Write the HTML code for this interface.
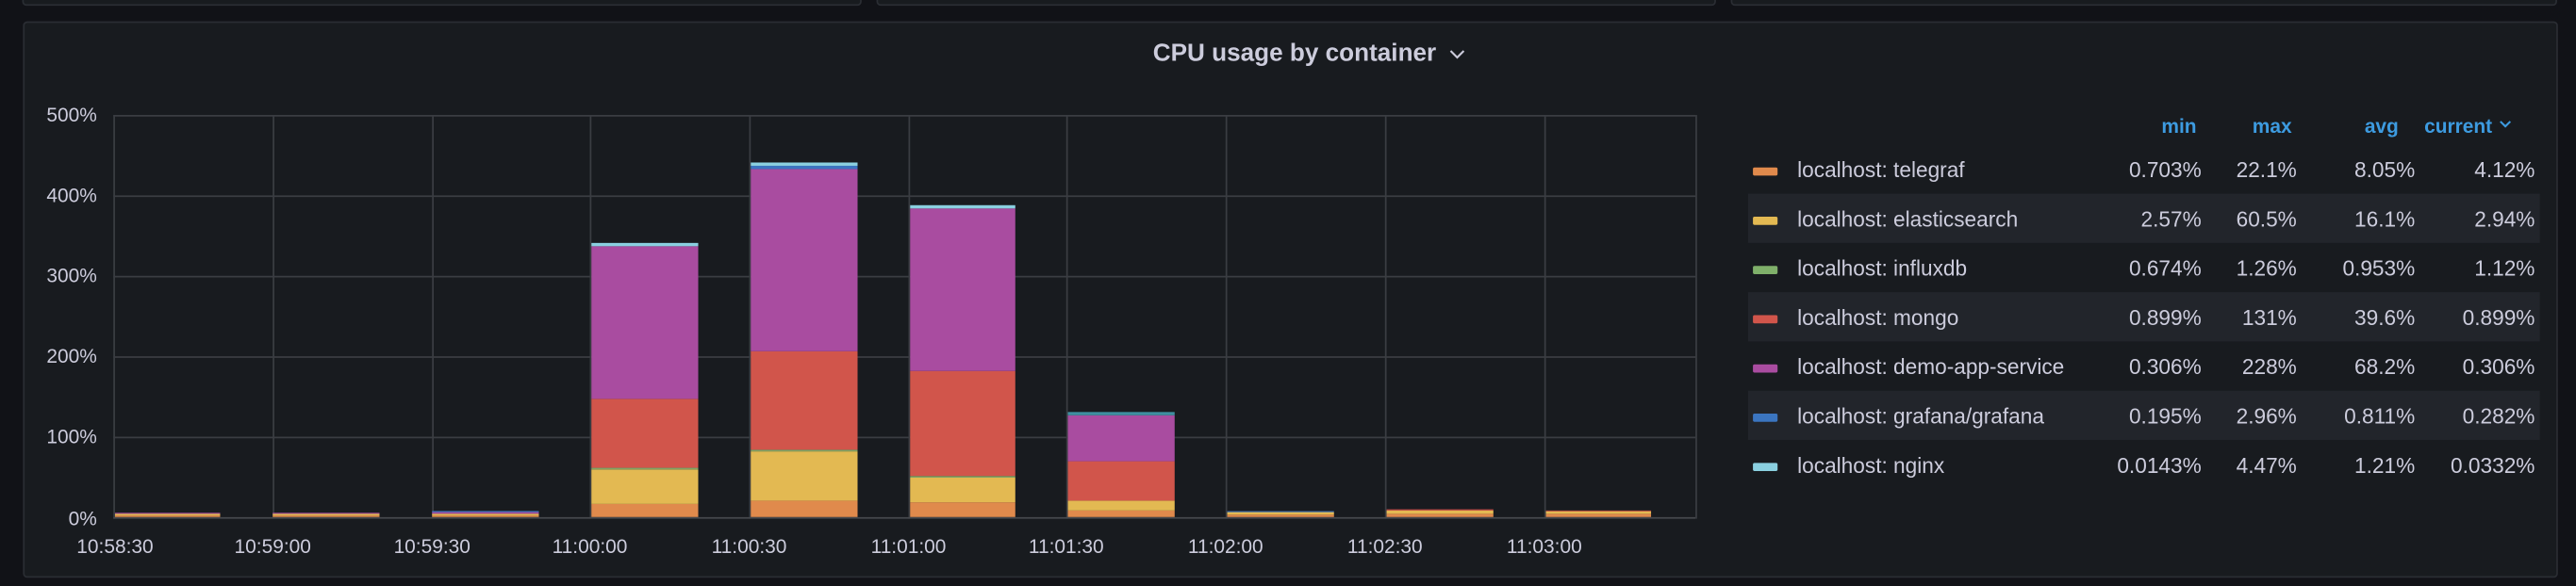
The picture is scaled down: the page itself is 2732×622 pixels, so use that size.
<!DOCTYPE html>
<html><head><style>
html,body{margin:0;padding:0;background:#111217;width:2732px;height:622px;overflow:hidden}
svg{display:block}
text{font-family:"Liberation Sans",sans-serif}
</style></head><body>
<svg width="2732" height="622" viewBox="0 0 1568 357" preserveAspectRatio="none" xmlns="http://www.w3.org/2000/svg">
<rect width="1568" height="357" fill="#111217"/>
<rect x="14" y="-10" width="510" height="13" rx="2" fill="#181b1f" stroke="#2a2d33"/>
<rect x="534" y="-10" width="510" height="13" rx="2" fill="#181b1f" stroke="#2a2d33"/>
<rect x="1054" y="-10" width="502" height="13" rx="2" fill="#181b1f" stroke="#2a2d33"/>
<rect x="14.5" y="13.5" width="1542" height="338" rx="2" fill="#181b1f" stroke="#2a2d33"/>
<text x="788" y="37" text-anchor="middle" font-size="15" fill="#ccccdc" font-weight="bold">CPU usage by container</text>
<path d="M883 31 l4 4 l4 -4" stroke="#ccccdc" fill="none" stroke-width="1.2"/>
<g stroke="#3a3d42" stroke-width="1">
<line x1="69" y1="70.5" x2="1032" y2="70.5"/><line x1="69" y1="119.5" x2="1032" y2="119.5"/>
<line x1="69" y1="168.5" x2="1032" y2="168.5"/><line x1="69" y1="217.5" x2="1032" y2="217.5"/>
<line x1="69" y1="266.5" x2="1032" y2="266.5"/>
<line x1="69.5" y1="70" x2="69.5" y2="316"/><line x1="166.5" y1="70" x2="166.5" y2="316"/>
<line x1="263.5" y1="70" x2="263.5" y2="316"/><line x1="359.5" y1="70" x2="359.5" y2="316"/>
<line x1="456.5" y1="70" x2="456.5" y2="316"/><line x1="553.5" y1="70" x2="553.5" y2="316"/>
<line x1="649.5" y1="70" x2="649.5" y2="316"/><line x1="746.5" y1="70" x2="746.5" y2="316"/>
<line x1="843.5" y1="70" x2="843.5" y2="316"/><line x1="940.5" y1="70" x2="940.5" y2="316"/>
<line x1="1032.5" y1="70" x2="1032.5" y2="316"/>
</g>
<g font-size="12" fill="#ccccdc" text-anchor="end">
<text x="59" y="74">500%</text><text x="59" y="123">400%</text><text x="59" y="172">300%</text>
<text x="59" y="221">200%</text><text x="59" y="270">100%</text><text x="59" y="320">0%</text>
</g>
<g font-size="12" fill="#ccccdc" text-anchor="middle">
<text x="70" y="337">10:58:30</text><text x="166" y="337">10:59:00</text><text x="263" y="337">10:59:30</text>
<text x="359" y="337">11:00:00</text><text x="456" y="337">11:00:30</text><text x="553" y="337">11:01:00</text>
<text x="649" y="337">11:01:30</text><text x="746" y="337">11:02:00</text><text x="843" y="337">11:02:30</text>
<text x="940" y="337">11:03:00</text>
</g>
<g>
<rect x="70" y="314" width="64" height="1" fill="#e08a4c"/><rect x="70" y="313" width="64" height="1" fill="#e3b952"/><rect x="70" y="312.4" width="64" height="0.6" fill="#a94ca0"/>
<rect x="166" y="314" width="65" height="1" fill="#e08a4c"/><rect x="166" y="313" width="65" height="1" fill="#e3b952"/><rect x="166" y="312.4" width="65" height="0.6" fill="#a94ca0"/>
<rect x="263" y="314" width="65" height="1" fill="#e08a4c"/><rect x="263" y="313" width="65" height="1" fill="#e3b952"/><rect x="263" y="312" width="65" height="1" fill="#a94ca0"/><rect x="263" y="311.3" width="65" height="0.7" fill="#3b75c0"/>
<rect x="360" y="307" width="65" height="8" fill="#e08a4c"/>
<rect x="360" y="286" width="65" height="21" fill="#e3b952"/>
<rect x="360" y="285" width="65" height="1" fill="#7fa564"/>
<rect x="360" y="243" width="65" height="42" fill="#d1554b"/>
<rect x="360" y="150" width="65" height="93" fill="#a94ca0"/>
<rect x="360" y="148" width="65" height="2" fill="#8ad0e0"/>
<rect x="457" y="305" width="65" height="10" fill="#e08a4c"/>
<rect x="457" y="275" width="65" height="30" fill="#e3b952"/>
<rect x="457" y="274" width="65" height="1" fill="#7fa564"/>
<rect x="457" y="214" width="65" height="60" fill="#d1554b"/>
<rect x="457" y="103" width="65" height="111" fill="#a94ca0"/>
<rect x="457" y="101" width="65" height="2" fill="#3b75c0"/>
<rect x="457" y="99" width="65" height="2" fill="#8ad0e0"/>
<rect x="554" y="306" width="64" height="9" fill="#e08a4c"/>
<rect x="554" y="291" width="64" height="15" fill="#e3b952"/>
<rect x="554" y="290" width="64" height="1" fill="#7fa564"/>
<rect x="554" y="226" width="64" height="64" fill="#d1554b"/>
<rect x="554" y="127" width="64" height="99" fill="#a94ca0"/>
<rect x="554" y="125" width="64" height="2" fill="#8ad0e0"/>
<rect x="650" y="311" width="65" height="4" fill="#e08a4c"/>
<rect x="650" y="305" width="65" height="6" fill="#e3b952"/>
<rect x="650" y="281" width="65" height="24" fill="#d1554b"/>
<rect x="650" y="253" width="65" height="28" fill="#a94ca0"/>
<rect x="650" y="251" width="65" height="2" fill="#3f8fa0"/>
<rect x="747" y="313.5" width="65" height="1.5" fill="#e08a4c"/><rect x="747" y="312" width="65" height="1.5" fill="#e3b952"/><rect x="747" y="311.4" width="65" height="0.6" fill="#3b75c0"/>
<rect x="844" y="313" width="65" height="2" fill="#e08a4c"/><rect x="844" y="311" width="65" height="2" fill="#e3b952"/><rect x="844" y="310.3" width="65" height="0.7" fill="#d1554b"/>
<rect x="941" y="313" width="64" height="2" fill="#e08a4c"/><rect x="941" y="311.5" width="64" height="1.5" fill="#e3b952"/><rect x="941" y="311" width="64" height="0.5" fill="#d1554b"/>
</g>
<line x1="69" y1="315.5" x2="1032" y2="315.5" stroke="#45484d"/>
<g font-size="12" fill="#3d9be0" font-weight="bold" text-anchor="end">
<text x="1337" y="81">min</text><text x="1395" y="81">max</text><text x="1460" y="81">avg</text><text x="1517" y="81">current</text>
</g>
<path d="M1522 74 l3 3 l3 -3" stroke="#3d9be0" fill="none" stroke-width="1.2"/>
<rect x="1064" y="118" width="482" height="30" fill="#22252b"/>
<rect x="1064" y="178" width="482" height="30" fill="#22252b"/>
<rect x="1064" y="238" width="482" height="30" fill="#22252b"/>
<g>
<rect x="1067" y="102" width="15" height="5" rx="1" fill="#e08a4c"/>
<rect x="1067" y="132" width="15" height="5" rx="1" fill="#e3b952"/>
<rect x="1067" y="162" width="15" height="5" rx="1" fill="#7fb06a"/>
<rect x="1067" y="192" width="15" height="5" rx="1" fill="#d1554b"/>
<rect x="1067" y="222" width="15" height="5" rx="1" fill="#a94ca0"/>
<rect x="1067" y="252" width="15" height="5" rx="1" fill="#3b75c0"/>
<rect x="1067" y="282" width="15" height="5" rx="1" fill="#8ad0e0"/>
</g>
<g font-size="13" fill="#ccccdc">
<text x="1094" y="108">localhost: telegraf</text>
<text x="1094" y="138">localhost: elasticsearch</text>
<text x="1094" y="168">localhost: influxdb</text>
<text x="1094" y="198">localhost: mongo</text>
<text x="1094" y="228">localhost: demo-app-service</text>
<text x="1094" y="258">localhost: grafana/grafana</text>
<text x="1094" y="288">localhost: nginx</text>
</g>
<g font-size="13" fill="#ccccdc" text-anchor="end">
<text x="1340" y="108">0.703%</text><text x="1398" y="108">22.1%</text><text x="1470" y="108">8.05%</text><text x="1543" y="108">4.12%</text>
<text x="1340" y="138">2.57%</text><text x="1398" y="138">60.5%</text><text x="1470" y="138">16.1%</text><text x="1543" y="138">2.94%</text>
<text x="1340" y="168">0.674%</text><text x="1398" y="168">1.26%</text><text x="1470" y="168">0.953%</text><text x="1543" y="168">1.12%</text>
<text x="1340" y="198">0.899%</text><text x="1398" y="198">131%</text><text x="1470" y="198">39.6%</text><text x="1543" y="198">0.899%</text>
<text x="1340" y="228">0.306%</text><text x="1398" y="228">228%</text><text x="1470" y="228">68.2%</text><text x="1543" y="228">0.306%</text>
<text x="1340" y="258">0.195%</text><text x="1398" y="258">2.96%</text><text x="1470" y="258">0.811%</text><text x="1543" y="258">0.282%</text>
<text x="1340" y="288">0.0143%</text><text x="1398" y="288">4.47%</text><text x="1470" y="288">1.21%</text><text x="1543" y="288">0.0332%</text>
</g>
</svg>
</body></html>
